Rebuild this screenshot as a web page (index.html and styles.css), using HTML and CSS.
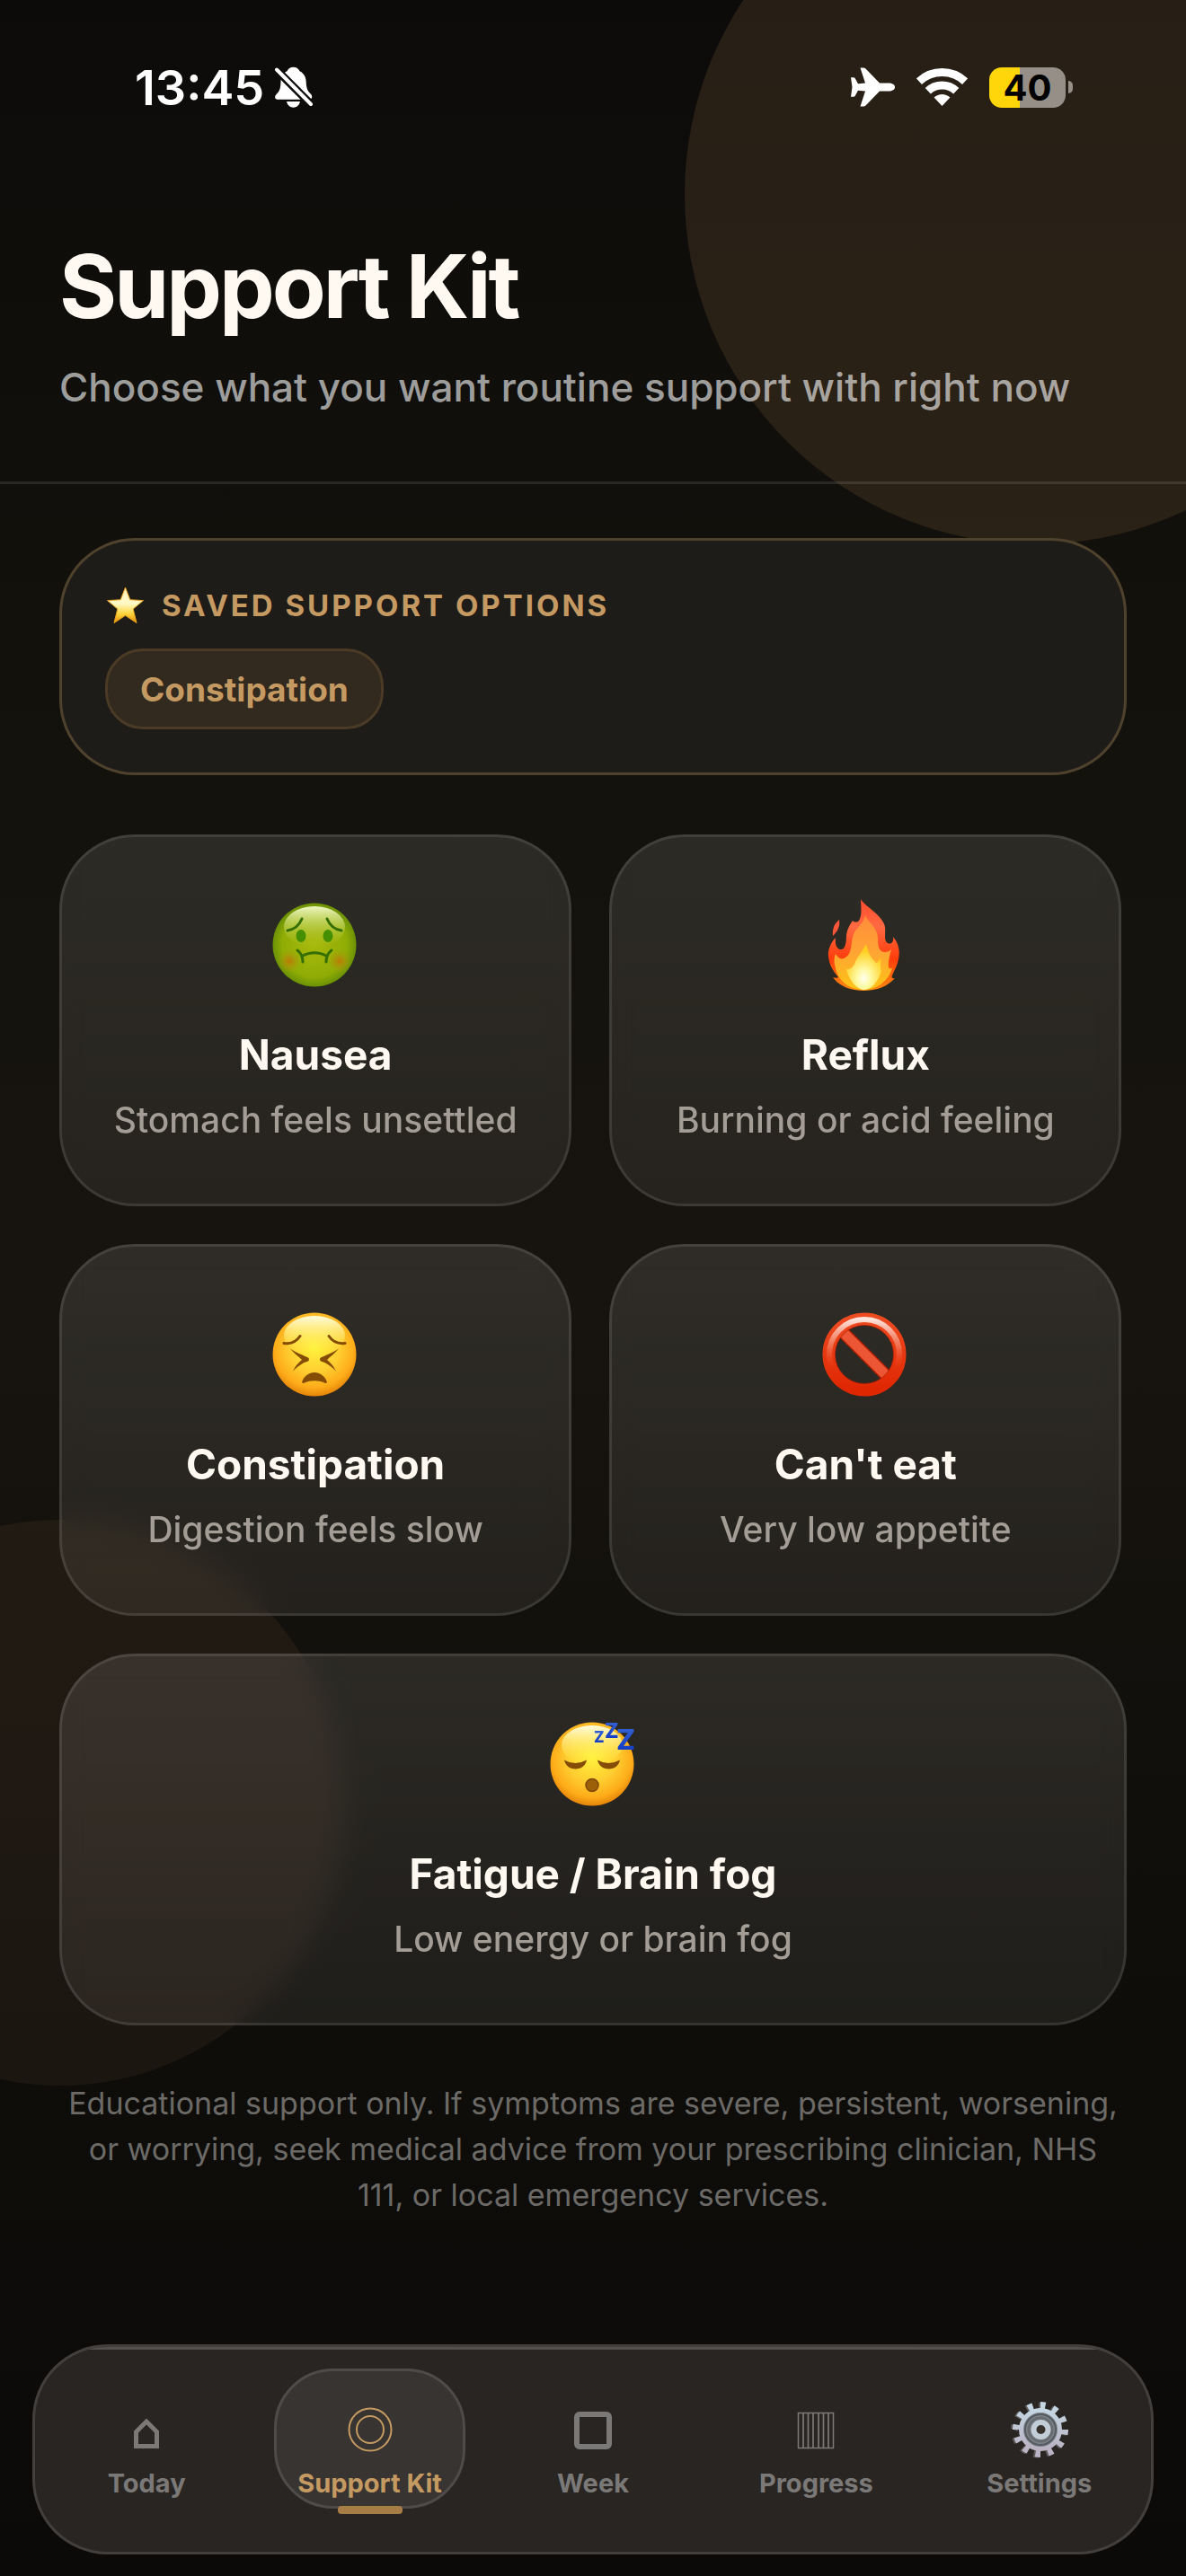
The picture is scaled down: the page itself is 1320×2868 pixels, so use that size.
FILE: index.html
```
<!DOCTYPE html>
<html lang="en">
<head>
    <meta charset="UTF-8">
    <meta name="viewport" content="width=device-width, initial-scale=1.0">
    <title>Support Kit</title>
    <link rel="stylesheet" href="styles.css">
</head>
<body>
    <div class="screen">
        <div class="glow glow-top"></div>
        <div class="glow glow-bottom"></div>

        <div class="status-bar">
            <div class="status-left">
                <span class="time">13:45</span>
                <svg width="42" height="46" viewBox="0 0 42 46" aria-label="Silent mode">
                    <mask id="bellCut">
                        <rect width="42" height="46" fill="#fff"/>
                        <path d="M0 2L42 44" stroke="#000" stroke-width="9"/>
                    </mask>
                    <g fill="#fff" mask="url(#bellCut)">
                        <path d="M20.500.7c3.500 0 6 1.800 7 4.600 4.600 2 7 6.500 7.200 11.700.2 7 1.600 10.500 5 13.500 2.600 2.400 1.800 6.200-1.700 6.200H3c-3.500 0-3.800-3.600-1-6.200 3.500-3.300 4.200-6.500 4.500-13.500.2-5.200 2.700-9.700 7-11.700 1-2.800 3.500-4.600 7-4.600z"/>
                        <path d="M13 39h15c-1 4.500-4 6.700-7.500 6.700S14 43.500 13 39z"/>
                    </g>
                    <path d="M2 3.500L40 42" stroke="#fff" stroke-width="4" stroke-linecap="round"/>
                </svg>
            </div>
            <div class="status-right">
                <svg width="49" height="44" viewBox="0 0 49 44" fill="#fff" aria-label="Airplane mode">
                    <path d="M49 22c0 2.800-3 4.500-7 4.500H32L16.500 42.500c-.8.800-1.800 1-3 1h-3L16 26.500l-8-.7-3.300 6c-.5.800-1 1-2 1H0L1.500 22 0 11.200h2.700c1 0 1.500.2 2 1l3.300 6 8-.7L10.500.5h3c1.200 0 2.200.2 3 1L32 17.500h10c4 0 7 1.700 7 4.500z"/>
                </svg>
                <svg width="57" height="42" viewBox="0 0 57 42" aria-label="Wi-Fi">
                    <g fill="none" stroke="#fff" stroke-width="9">
                        <path d="M2.900 14.600a37.500 37.500 0 0 1 51.200 0"/>
                        <path d="M12.800 25.200a23 23 0 0 1 31.400 0"/>
                    </g>
                    <path d="M28.500 42L19.600 32.500a13 13 0 0 1 17.800 0z" fill="#fff"/>
                </svg>
                <div class="battery">
                    <div class="battery-body">40</div>
                    <div class="battery-nub"></div>
                </div>
            </div>
        </div>

        <header class="header">
            <h1>Support Kit</h1>
            <p>Choose what you want routine support with right now</p>
        </header>

        <main class="content">
            <section class="saved">
                <h2 class="saved-title">
                    <svg width="45" height="42" viewBox="0 0 45 42" aria-hidden="true">
                        <defs>
                            <linearGradient id="starFill" x1="0" y1="0" x2="0" y2="1">
                                <stop offset="0" stop-color="#fff3b8"/>
                                <stop offset=".45" stop-color="#fff9c8"/>
                                <stop offset=".75" stop-color="#fbd43a"/>
                                <stop offset="1" stop-color="#e58a08"/>
                            </linearGradient>
                        </defs>
                        <path d="M22.500 1l5.300 13.700 14.700.9-11.300 9.400 3.800 15.500-12.500-8.200-12.500 8.200 3.800-15.500L2.500 15.600l14.700-.9z" fill="url(#starFill)" stroke="#e8a21c" stroke-width="1" stroke-linejoin="round"/>
                    </svg>
                    SAVED SUPPORT OPTIONS
                </h2>
                <button type="button" class="chip">Constipation</button>
            </section>

            <section class="grid">
                <button type="button" class="card">
                    <svg class="emoji" viewBox="0 0 102 102" aria-hidden="true">
                        <defs>
                            <radialGradient id="greenFace" cx=".5" cy=".5" r=".52">
                                <stop offset="0" stop-color="#a8b90c"/>
                                <stop offset=".75" stop-color="#8fac05"/>
                                <stop offset="1" stop-color="#648c05"/>
                            </radialGradient>
                            <linearGradient id="greenShine" x1="0" y1="0" x2="0" y2="1">
                                <stop offset="0" stop-color="#eff8c4"/>
                                <stop offset="1" stop-color="#b0c420" stop-opacity="0"/>
                            </linearGradient>
                            <radialGradient id="cheek">
                                <stop offset="0" stop-color="#bd7a08"/>
                                <stop offset="1" stop-color="#a89a08" stop-opacity="0"/>
                            </radialGradient>
                        </defs>
                        <circle cx="50" cy="51" r="46.500" fill="url(#greenFace)"/>
                        <ellipse cx="50" cy="31" rx="34" ry="23" fill="url(#greenShine)"/>
                        <circle cx="22" cy="69" r="13" fill="url(#cheek)"/>
                        <circle cx="78" cy="69" r="13" fill="url(#cheek)"/>
                        <ellipse cx="35" cy="41" rx="5.500" ry="7" fill="#459002"/>
                        <ellipse cx="65" cy="41" rx="5.500" ry="7" fill="#459002"/>
                        <g fill="none" stroke="#356f03" stroke-width="3" stroke-linecap="round">
                            <path d="M20 35c7-1 13-6 16-13"/>
                            <path d="M80 35c-7-1-13-6-16-13"/>
                            <path d="M37 63c8-4.500 18-4.500 26 0"/>
                            <path d="M31 57c4 3 6 7 6 13"/>
                            <path d="M69 57c-4 3-6 7-6 13"/>
                        </g>
                    </svg>
                    <span class="card-title">Nausea</span>
                    <span class="card-text">Stomach feels unsettled</span>
                </button>

                <button type="button" class="card">
                    <svg class="emoji" viewBox="0 0 102 102" aria-hidden="true">
                        <defs>
                            <linearGradient id="flameOuter" x1="0" y1="0" x2="0" y2="1">
                                <stop offset="0" stop-color="#ff4a2c"/>
                                <stop offset=".3" stop-color="#ff6a42"/>
                                <stop offset=".65" stop-color="#ff3d0c"/>
                                <stop offset="1" stop-color="#f98a10"/>
                            </linearGradient>
                            <linearGradient id="flameMid" x1="0" y1="0" x2="0" y2="1">
                                <stop offset="0" stop-color="#ff8c3a"/>
                                <stop offset=".5" stop-color="#ffa534"/>
                                <stop offset="1" stop-color="#ffc414"/>
                            </linearGradient>
                            <radialGradient id="flameCore" cx=".5" cy=".75" r=".6">
                                <stop offset="0" stop-color="#fffff0"/>
                                <stop offset=".35" stop-color="#fff9a0"/>
                                <stop offset="1" stop-color="#ffcf20"/>
                            </radialGradient>
                        </defs>
                        <path d="M46 0c3 7 25 18 27 31 1 7-2 15 3 18 4 2 7-2 6-7 6 7 8 15 6 25-1 6-4 11-7 18-1 2 0 4 3 3-8 9-20 14-35 14-15 0-27-5-34-15 2 1 5 1 6 0-6-7-10-14-11-23-1-8 3-16 8-21-1 9 2 13 6 13 5 0 6-8 6-16 1-7 4-12 7-16 2 2 5 2 7 0 4-7 2-16 2-24z" fill="url(#flameOuter)"/>
                        <path d="M22 23c1 7-1 12-7 18-1-8 2-14 7-18z" fill="#ff563a"/>
                        <path d="M51 18c4 9 14 14 14 26 0 8 1 15 8 15 3 0 6-2 7-3-2 8-4 16-3 20 1 2 3 1 4 1-4 14-17 24-32 24S21 92 18 77c-2-7-2-12 0-16 3 5 7 7 11 4 7-4 6-14 8-23 2-10 12-13 14-24z" fill="url(#flameMid)"/>
                        <path d="M52 50c2 9 5 15 10 20 2 3 5-2 6-5 1 7-1 11 1 15-3 11-11 21-19 21s-17-10-20-23c5 1 8-3 10-8 3-7 8-12 12-20z" fill="url(#flameCore)"/>
                    </svg>
                    <span class="card-title">Reflux</span>
                    <span class="card-text">Burning or acid feeling</span>
                </button>

                <button type="button" class="card">
                    <svg class="emoji" viewBox="0 0 102 102" aria-hidden="true">
                        <defs>
                            <radialGradient id="yellowFace" cx=".5" cy=".42" r=".6">
                                <stop offset="0" stop-color="#fff23c"/>
                                <stop offset=".5" stop-color="#ffcd30"/>
                                <stop offset=".8" stop-color="#fdab19"/>
                                <stop offset="1" stop-color="#e07c05"/>
                            </radialGradient>
                            <linearGradient id="yellowShine" x1="0" y1="0" x2="0" y2="1">
                                <stop offset="0" stop-color="#fffde0"/>
                                <stop offset="1" stop-color="#fff23c" stop-opacity="0"/>
                            </linearGradient>
                        </defs>
                        <circle cx="50" cy="51" r="46.500" fill="url(#yellowFace)"/>
                        <ellipse cx="50" cy="30" rx="34" ry="22" fill="url(#yellowShine)"/>
                        <g fill="none" stroke="#844c05" stroke-width="3" stroke-linecap="round">
                            <path d="M16 38.500c8 1 14-2 18-8"/>
                            <path d="M84 38.500c-8 1-14-2-18-8"/>
                        </g>
                        <g fill="#844c05">
                            <path d="M23 44.500c7 5 14 7 20 10q2 2 0 4c-7 2-12 6-17 11 3-6 6-9 10-12.500-4-4-9-7.500-13-12.500z"/>
                            <path d="M77 44.500c-7 5-14 7-20 10q-2 2 0 4c7 2 12 6 17 11-3-6-6-9-10-12.500 4-4 9-7.500 13-12.500z"/>
                            <path d="M36 82c2-7 8-11 14-11s12 4 14 11q-1 1.500-3 .5c-7-3-15-3-22 0q-2 1-3-.5z"/>
                        </g>
                    </svg>
                    <span class="card-title">Constipation</span>
                    <span class="card-text">Digestion feels slow</span>
                </button>

                <button type="button" class="card">
                    <svg class="emoji" viewBox="0 0 102 102" aria-hidden="true">
                        <defs>
                            <linearGradient id="banFill" x1="0" y1="0" x2="0" y2="1">
                                <stop offset="0" stop-color="#ee4a20"/>
                                <stop offset="1" stop-color="#df2702"/>
                            </linearGradient>
                            <linearGradient id="banShine" x1="0" y1="0" x2="0" y2="1">
                                <stop offset="0" stop-color="#ffe4dc"/>
                                <stop offset=".4" stop-color="#f4886c" stop-opacity=".6"/>
                                <stop offset=".7" stop-color="#ee4a20" stop-opacity="0"/>
                            </linearGradient>
                        </defs>
                        <path d="M25 25L77 77" stroke="#ab1e04" stroke-width="14"/>
                        <path d="M25 25L77 77" stroke="#ec5634" stroke-width="11"/>
                        <circle cx="50" cy="51" r="39.500" fill="none" stroke="url(#banFill)" stroke-width="14"/>
                        <circle cx="50" cy="51" r="39" fill="none" stroke="url(#banShine)" stroke-width="6"/>
                        <circle cx="50" cy="51" r="32.500" fill="none" stroke="#a81c04" stroke-width="1" opacity=".7"/>
                    </svg>
                    <span class="card-title">Can't eat</span>
                    <span class="card-text">Very low appetite</span>
                </button>

                <button type="button" class="card card-wide">
                    <svg class="emoji" viewBox="0 0 102 102" aria-hidden="true">
                        <defs>
                            <linearGradient id="zFill" x1="0" y1="0" x2="0" y2="1">
                                <stop offset="0" stop-color="#3c6ad8"/>
                                <stop offset="1" stop-color="#0a32c0"/>
                            </linearGradient>
                        </defs>
                        <circle cx="50" cy="51" r="46.500" fill="url(#yellowFace)"/>
                        <ellipse cx="50" cy="30" rx="34" ry="22" fill="url(#yellowShine)"/>
                        <g fill="#844c05">
                            <path d="M19 46.500q12 7 25 0c-1 6-6 10-12.500 10S20 52.500 19 46.500z"/>
                            <path d="M56 46.500q12 7 25 0c-1 6-6 10-12.500 10S57 52.500 56 46.500z"/>
                        </g>
                        <circle cx="50" cy="74.500" r="7" fill="#9c6008" stroke="#7d4804" stroke-width="1.500"/>
                        <g class="zzz" fill="url(#zFill)">
                            <text x="52" y="27" font-size="17">Z</text>
                            <text x="64" y="22" font-size="23">Z</text>
                            <text x="77" y="35" font-size="31">Z</text>
                        </g>
                    </svg>
                    <span class="card-title">Fatigue / Brain fog</span>
                    <span class="card-text">Low energy or brain fog</span>
                </button>
            </section>

            <p class="disclaimer">Educational support only. If symptoms are severe, persistent, worsening, or worrying, seek medical advice from your prescribing clinician, NHS 111, or local emergency services.</p>
        </main>

        <nav class="tab-bar">
            <a href="#today" class="tab">
                <svg class="tab-icon" viewBox="0 0 64 64" fill="none" stroke="currentColor" stroke-width="5" aria-hidden="true">
                    <path d="M20.500 50.500V34.500L32 23l11.500 11.500v16z"/>
                </svg>
                <span>Today</span>
            </a>
            <a href="#support" class="tab active">
                <svg class="tab-icon" viewBox="0 0 64 64" fill="none" stroke="currentColor" stroke-width="2" aria-hidden="true">
                    <circle cx="32" cy="32" r="23.500"/>
                    <circle cx="32" cy="32" r="15"/>
                </svg>
                <span>Support Kit</span>
            </a>
            <a href="#week" class="tab">
                <svg class="tab-icon" viewBox="0 0 64 64" fill="none" stroke="currentColor" stroke-width="6" aria-hidden="true">
                    <rect x="14" y="15" width="36" height="36" rx="3"/>
                </svg>
                <span>Week</span>
            </a>
            <a href="#progress" class="tab">
                <svg class="tab-icon" viewBox="0 0 64 64" fill="none" stroke="currentColor" aria-hidden="true">
                    <rect x="12.500" y="13.500" width="39" height="39" stroke-width="1.500"/>
                    <path d="M18 14v38M23.500 14v38M29 14v38M35 14v38M40.500 14v38M46 14v38" stroke-width="1.700"/>
                </svg>
                <span>Progress</span>
            </a>
            <a href="#settings" class="tab">
                <svg class="tab-icon" viewBox="0 0 64 64" fill="none" aria-hidden="true">
                    <defs>
                        <linearGradient id="gearFill" x1="0" y1="0" x2="0" y2="1">
                            <stop offset="0" stop-color="#c4d6e2"/>
                            <stop offset="1" stop-color="#b9b2c2"/>
                        </linearGradient>
                    </defs>
                    <circle cx="31" cy="32.500" r="27" stroke="#5c5a58" stroke-width="8" pathLength="24" stroke-dasharray="0.8 1.2"/>
                    <circle cx="33" cy="32" r="27" stroke="url(#gearFill)" stroke-width="8" pathLength="24" stroke-dasharray="0.8 1.2"/>
                    <circle cx="33" cy="32" r="21.500" fill="#7c838a" stroke="url(#gearFill)" stroke-width="5"/>
                    <circle cx="33" cy="32" r="17" stroke="#555b61" stroke-width="2"/>
                    <circle cx="33" cy="32" r="13" stroke="#686b70" stroke-width="3"/>
                    <circle cx="33.500" cy="32" r="8" fill="#37322e" stroke="#c3cdd8" stroke-width="6"/>
                </svg>
                <span>Settings</span>
            </a>
        </nav>
    </div>
</body>
</html>
```
FILE: styles.css
```
* {
    margin: 0;
    padding: 0;
    box-sizing: border-box;
}

body {
    font-family: Inter, "Liberation Sans", sans-serif;
    background: #0c0b09;
    color: #fff9f2;
}

button {
    font-family: inherit;
    color: inherit;
    cursor: pointer;
}

.screen {
    position: relative;
    display: flex;
    flex-direction: column;
    min-height: 100vh;
    overflow: hidden;
    background: linear-gradient(180deg, #0c0b0a 0%, #12110c 25%, #17140f 50%, #0e0d0a 80%, #0b0a09 100%);
}

/* Decorative circles behind the content */
.glow {
    position: absolute;
    border-radius: 50%;
}

.glow-top {
    top: -174px;
    right: -222px;
    width: 780px;
    height: 780px;
    background: rgba(196, 142, 86, 0.15);
}

.glow-bottom {
    bottom: 546px;
    left: -248px;
    width: 630px;
    height: 630px;
    background: rgba(196, 136, 90, 0.08);
}

.status-bar,
.header,
.content,
.tab-bar {
    position: relative;
}

/* Status bar */
.status-bar {
    display: flex;
    justify-content: space-between;
    align-items: center;
    padding: 66px 126px 0 150px;
}

.status-left,
.status-right {
    display: flex;
    align-items: center;
    height: 62px;
}

.status-left {
    gap: 12px;
}

.status-right {
    gap: 24px;
}

.time {
    font-size: 54px;
    font-weight: 600;
    color: #fff;
}

.battery {
    display: flex;
    align-items: center;
    gap: 3px;
}

.battery-body {
    width: 85px;
    height: 45px;
    border-radius: 14px;
    background: linear-gradient(90deg, #ffd60a 40%, #958f87 40%);
    color: #000;
    font-size: 40px;
    font-weight: 700;
    line-height: 45px;
    text-align: center;
}

.battery-nub {
    width: 5px;
    height: 14px;
    border-radius: 0 5px 5px 0;
    background: #958f87;
}

/* Header */
.header {
    padding: 131px 66px 75px;
    border-bottom: 3px solid rgba(255, 255, 255, 0.1);
}

.header h1 {
    font-size: 98px;
    font-weight: 700;
    line-height: 120px;
    letter-spacing: -3px;
    margin-bottom: 22px;
}

.header p {
    font-size: 44px;
    font-weight: 500;
    line-height: 60px;
    color: rgba(255, 255, 255, 0.6);
}

/* Content */
.content {
    padding: 60px 66px;
}

.saved {
    padding: 48px;
    margin-bottom: 66px;
    border: 3px solid rgba(196, 154, 95, 0.3);
    border-radius: 84px;
    background: #1e1c18;
}

.saved-title {
    display: flex;
    align-items: center;
    gap: 18px;
    margin-bottom: 24px;
    font-size: 33px;
    font-weight: 700;
    line-height: 48px;
    letter-spacing: 3px;
    color: #c49a62;
}

.chip {
    display: block;
    height: 90px;
    padding: 0 36px;
    border: 3px solid #4b3a26;
    border-radius: 42px;
    background: #32291f;
    color: #c49a62;
    font-size: 37px;
    font-weight: 700;
}

.grid {
    display: flex;
    flex-wrap: wrap;
    gap: 42px;
}

.card {
    display: flex;
    flex-direction: column;
    align-items: center;
    width: 48%;
    padding: 69px 24px;
    border: 3px solid rgba(255, 255, 255, 0.1);
    border-radius: 84px;
    background: linear-gradient(180deg, rgba(255, 250, 240, 0.11), rgba(255, 250, 240, 0.07)) border-box;
    backdrop-filter: blur(15px);
}

.card-wide {
    width: 100%;
}

.emoji {
    width: 102px;
    height: 102px;
    margin-bottom: 42px;
}

.zzz {
    font-weight: 800;
}

.card-title {
    margin-bottom: 20px;
    font-size: 46px;
    font-weight: 700;
    line-height: 58px;
}

.card-text {
    font-size: 39px;
    font-weight: 500;
    line-height: 48px;
    color: #a39d96;
}

.disclaimer {
    margin-top: 61px;
    padding: 0 6px;
    font-size: 34px;
    line-height: 51px;
    text-align: center;
    color: #6c6a66;
}

/* Tab bar */
.tab-bar {
    display: grid;
    grid-template-columns: repeat(5, 1fr);
    margin: auto 36px 24px;
    padding: 24px 0 48px;
    overflow: hidden;
    border: 3px solid rgba(255, 255, 255, 0.12);
    border-radius: 84px;
    background: #292522;
}

.tab-bar::before {
    content: "";
    position: absolute;
    top: 0;
    left: 0;
    right: 0;
    height: 3px;
    background: rgba(255, 255, 255, 0.2);
}

.tab {
    position: relative;
    display: flex;
    flex-direction: column;
    align-items: center;
    margin: 0 18px;
    padding: 33px 0 7px;
    border: 3px solid transparent;
    border-radius: 66px;
    font-size: 29px;
    font-weight: 700;
    line-height: 36px;
    white-space: nowrap;
    text-decoration: none;
    color: #7b7977;
}

.tab-icon {
    width: 64px;
    height: 64px;
    margin-bottom: 10px;
}

.tab.active {
    border-color: #4e4c4a;
    background: #383431;
    color: #c49a62;
}

.tab.active::after {
    content: "";
    position: absolute;
    bottom: -9px;
    left: 50%;
    width: 72px;
    height: 9px;
    margin-left: -36px;
    border-radius: 4px;
    background: #a67d45;
}
```
